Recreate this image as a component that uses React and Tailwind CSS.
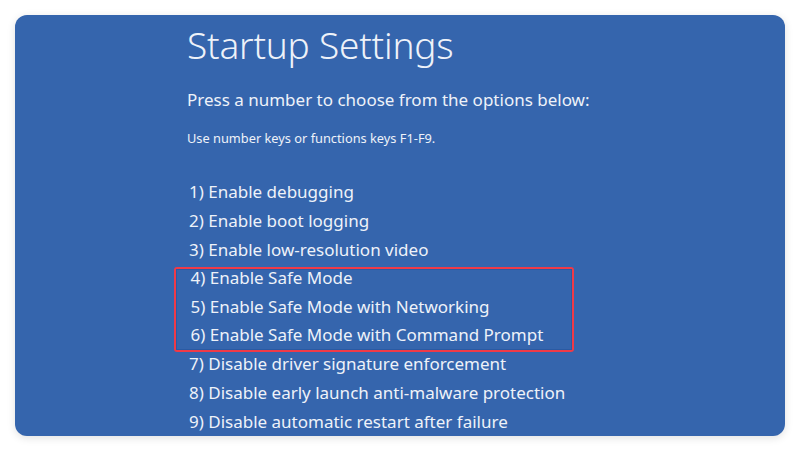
import React from "react";

const options = [
  "1) Enable debugging",
  "2) Enable boot logging",
  "3) Enable low-resolution video",
  "4) Enable Safe Mode",
  "5) Enable Safe Mode with Networking",
  "6) Enable Safe Mode with Command Prompt",
  "7) Disable driver signature enforcement",
  "8) Disable early launch anti-malware protection",
  "9) Disable automatic restart after failure",
];

export default function App() {
  const top = options.slice(0, 3);
  const safe = options.slice(3, 6);
  const rest = options.slice(6);
  return (
    <div className="w-[800px] h-[451px] bg-white p-[15px] overflow-hidden" style={{ fontFamily: '"Noto Sans", "Open Sans", sans-serif' }}>
      <div className="h-[421px] w-[770px] rounded-[12px] bg-[#3565ad] shadow-[0_2px_8px_rgba(0,0,0,0.12)] pl-[172px] pt-[8px] text-[#eef2f9] overflow-hidden">
        <h1 className="text-[37px] leading-[44px] font-light tracking-[-0.2px]">Startup Settings</h1>
        <p className="mt-[22px] text-[17px] leading-[22px]">Press a number to choose from the options below:</p>
        <p className="mt-[19px] text-[12.8px] leading-[16px]">Use number keys or functions keys F1-F9.</p>
        <div className="mt-[32px] text-[17px] leading-[28.75px]">
          {top.map((o) => (
            <div key={o} className="pl-[2px]">{o}</div>
          ))}
          {/* highlighted safe mode options */}
          <div className="-ml-[13px] mt-[2.6px] -mb-[1.4px] h-[85px] w-[400px] rounded-[3px] border-[2.5px] border-[#ef3a47]">
            <div className="h-full border border-[#2a5aa3] pl-[13.5px]">
              <div className="-mt-[5.9px]">
                {safe.map((o) => (
                  <div key={o}>{o}</div>
                ))}
              </div>
            </div>
          </div>
          {rest.map((o) => (
            <div key={o} className="pl-[2px]">{o}</div>
          ))}
        </div>
      </div>
    </div>
  );
}
